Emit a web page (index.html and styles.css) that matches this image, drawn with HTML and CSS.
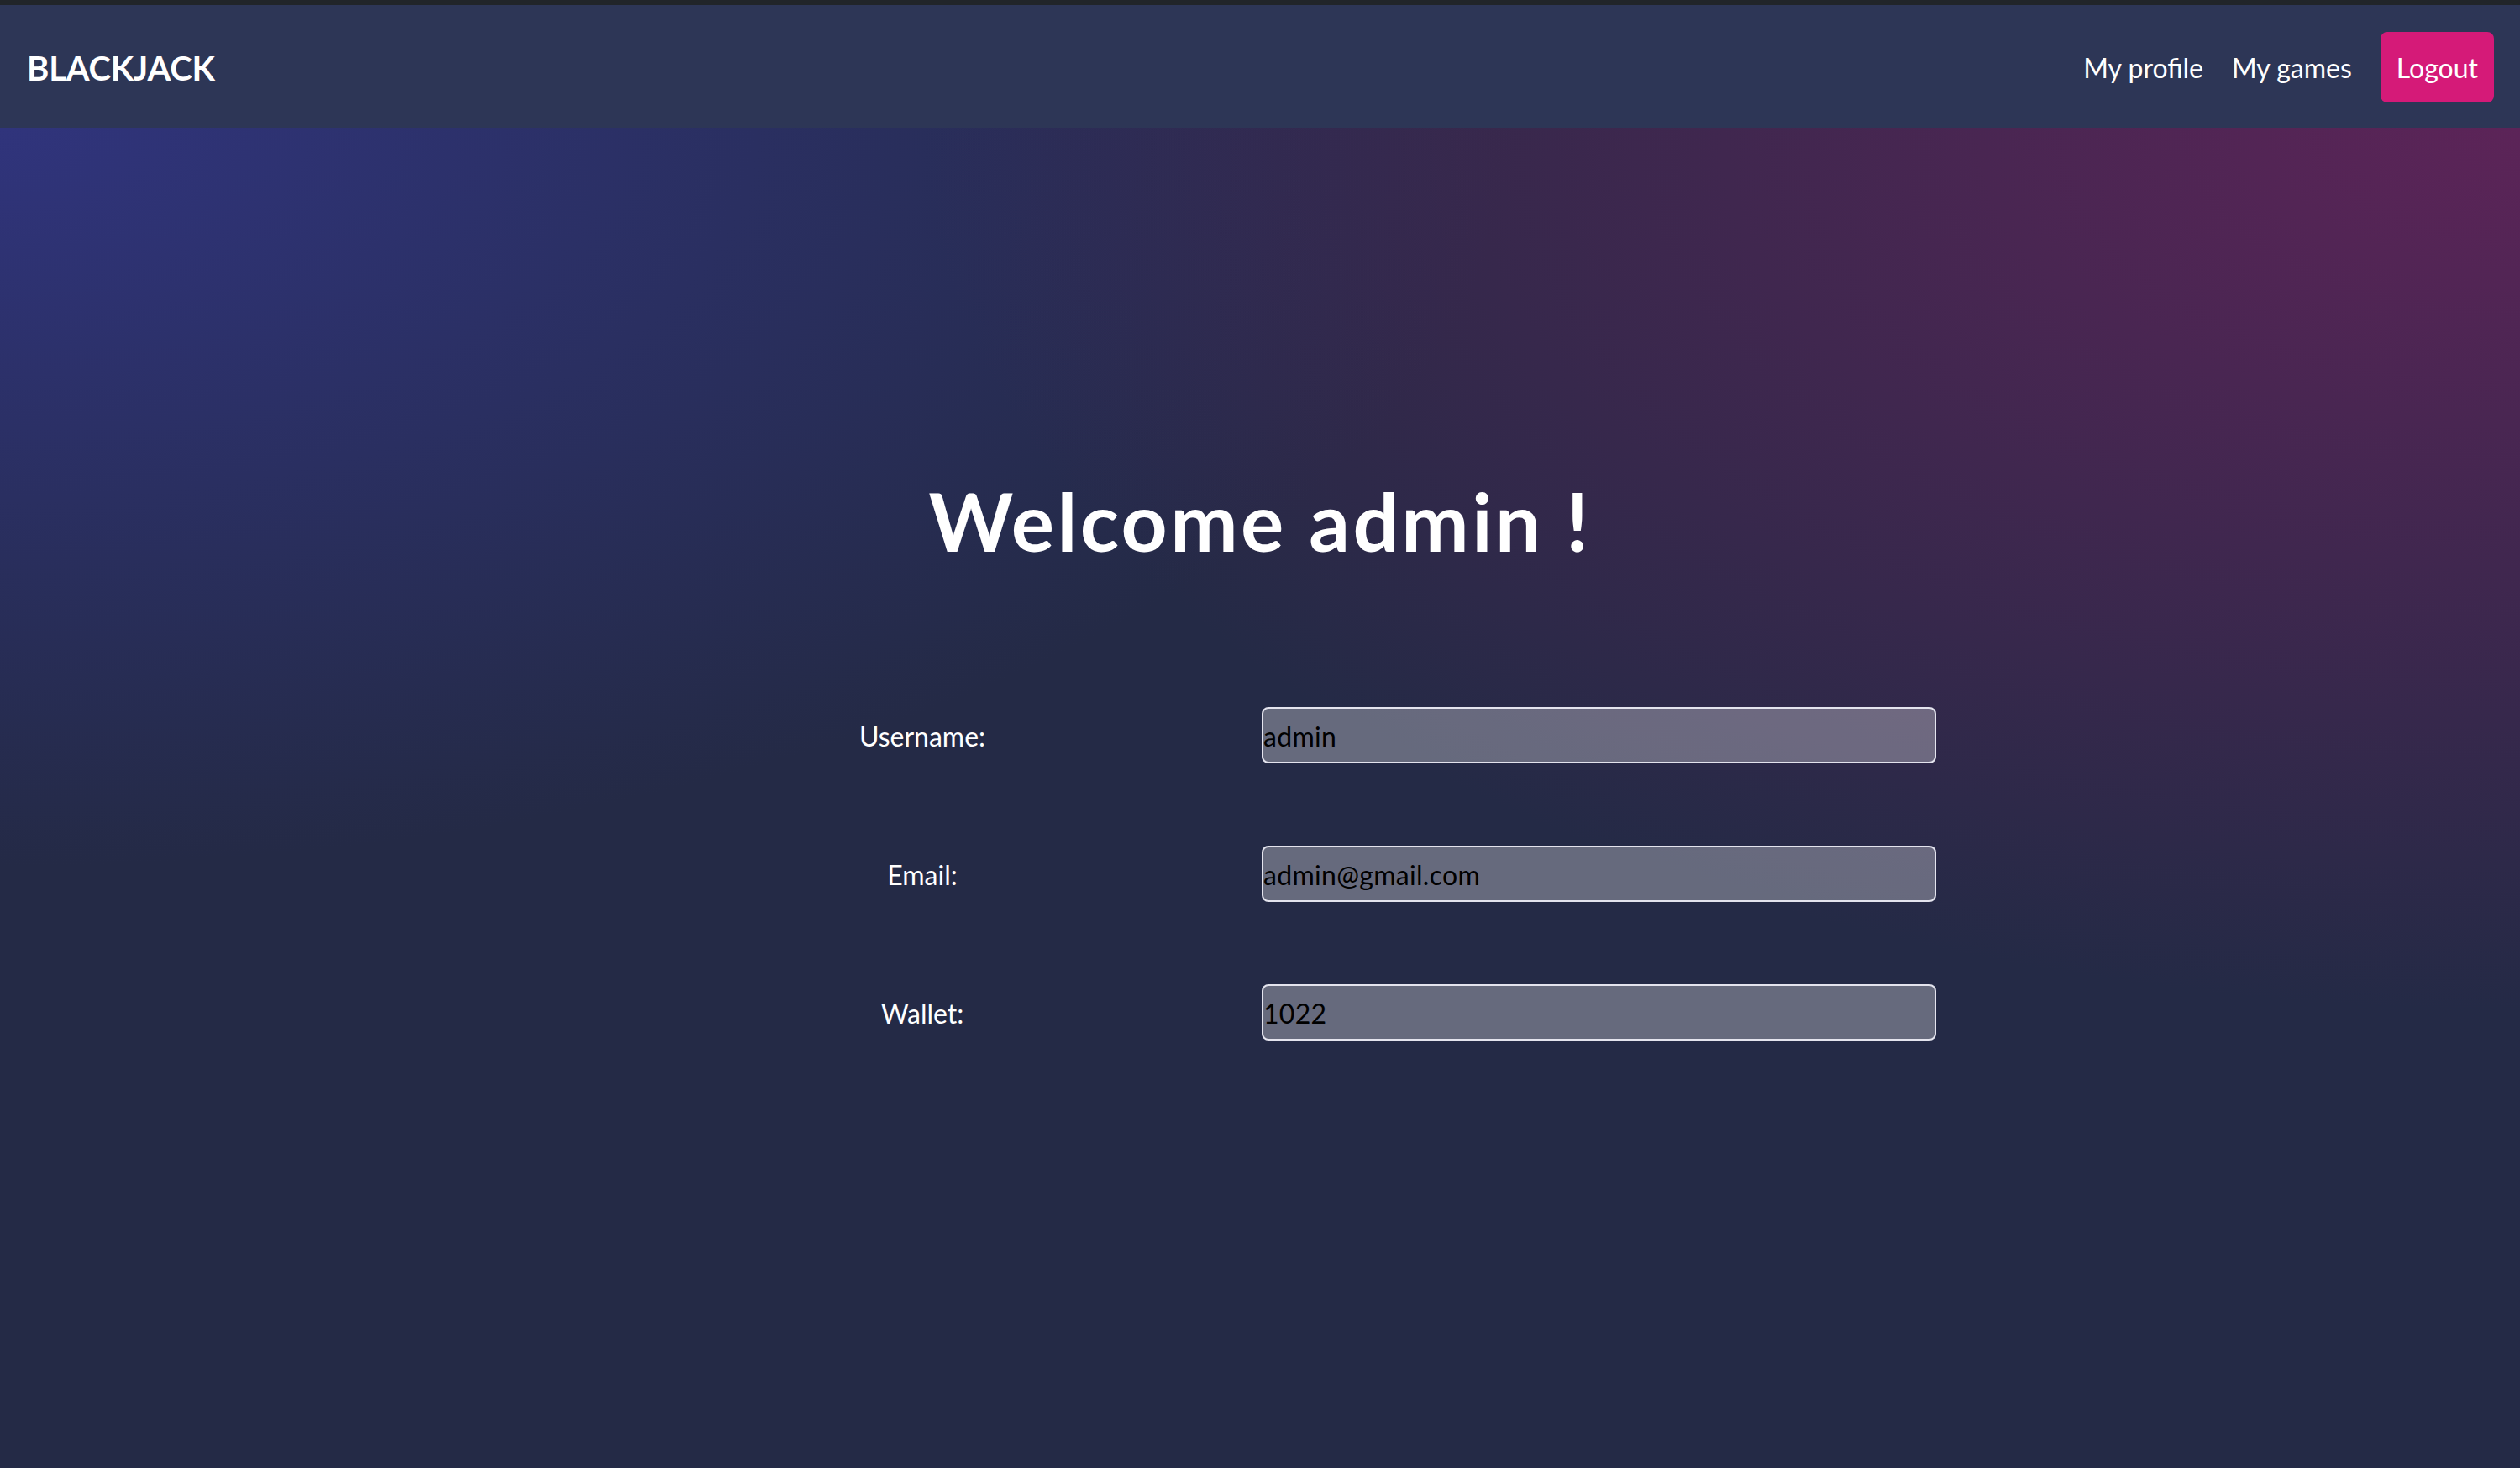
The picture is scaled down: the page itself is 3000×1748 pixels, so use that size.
FILE: index.html
```html
<!DOCTYPE html>
<html lang="en">
<head>
<meta charset="utf-8">
<title>Blackjack - My profile</title>
<link rel="stylesheet" href="styles.css">
</head>
<body>
<div class="top-strip"></div>
<nav class="navbar">
  <a class="brand" href="#">BLACKJACK</a>
  <ul class="nav">
    <li><a class="nav-link" href="#">My profile</a></li>
    <li><a class="nav-link" href="#">My games</a></li>
    <li><a class="nav-link btn-logout" href="#">Logout</a></li>
  </ul>
</nav>
<main class="page">
  <h1 class="welcome">Welcome admin !</h1>
  <form class="profile-form">
    <label class="field-label" for="username">Username:</label>
    <input class="field-input" id="username" type="text" value="admin" readonly>
    <label class="field-label" for="email">Email:</label>
    <input class="field-input" id="email" type="text" value="admin@gmail.com" readonly>
    <label class="field-label" for="wallet">Wallet:</label>
    <input class="field-input" id="wallet" type="text" value="1022" readonly>
  </form>
</main>
</body>
</html>
```
FILE: styles.css
```css
html, body {
  margin: 0;
  padding: 0;
}
body {
  font-family: Lato, "Open Sans", "Liberation Sans", sans-serif;
  background: #242a46;
  min-height: 1748px;
  display: flex;
  flex-direction: column;
}
.top-strip {
  height: 6px;
  background: #212529;
}
.navbar {
  height: 147px;
  background: #2d3656;
  display: flex;
  align-items: center;
  justify-content: space-between;
  padding: 0 31px 0 32px;
}
.brand {
  color: #fff;
  font-weight: 700;
  font-size: 40px;
  text-decoration: none;
  padding-top: 3px;
  letter-spacing: -0.2px;
}
.nav {
  list-style: none;
  margin: 0;
  padding: 0;
  display: flex;
  align-items: center;
}
.nav-link {
  display: flex;
  align-items: center;
  color: #fff;
  font-size: 32px;
  text-decoration: none;
  padding: 2px 17px 0;
}
.btn-logout {
  margin-left: 17px;
  height: 84px;
  box-sizing: border-box;
  padding: 2px 19px 0;
  background: #d51a78;
  border-radius: 8px;
}
.page {
  flex: 1;
  display: flex;
  flex-direction: column;
  align-items: center;
  background:
    radial-gradient(ellipse 1900px 1050px at 100% 0%, rgba(92, 36, 88, 1), rgba(92, 36, 88, 0)),
    radial-gradient(ellipse 1800px 880px at 0% 0%, rgba(48, 52, 124, 1), rgba(48, 52, 124, 0)),
    #242a46;
}
.welcome {
  margin: 409px 0 0;
  color: #fff;
  font-size: 96px;
  font-weight: 700;
  line-height: 1.2;
  letter-spacing: 3.4px;
}
.profile-form {
  margin: 165px 0 0 201px;
  display: grid;
  grid-template-columns: 404px 803px;
  column-gap: 202px;
  row-gap: 98px;
  align-items: center;
}
.field-label {
  color: #fff;
  font-size: 32px;
  text-align: center;
  padding-top: 2px;
}
.field-input {
  box-sizing: border-box;
  width: 803px;
  height: 67px;
  margin: 0;
  padding: 2px 0 0;
  border: 2px solid #e4e4ee;
  border-radius: 8px;
  background: rgba(255, 255, 255, 0.3);
  color: #000;
  font-family: Lato, "Open Sans", "Liberation Sans", sans-serif;
  font-size: 32px;
  letter-spacing: 0.3px;
  outline: none;
}
```
